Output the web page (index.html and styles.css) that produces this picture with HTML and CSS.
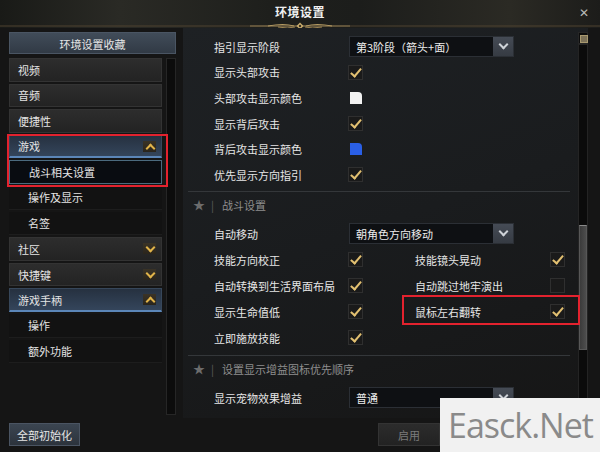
FILE: index.html
```html
<!DOCTYPE html>
<html lang="zh-CN">
<head>
  <meta charset="utf-8">
  <title>环境设置</title>
  <link rel="stylesheet" href="styles.css">
</head>
<body>
  <div class="win">
    <!-- 标题栏 -->
    <header class="titlebar">
      <div class="title-row">
        <span></span>
        <span class="title">环境设置</span>
        <span class="close">✕</span>
      </div>
      <svg class="rule" width="600" height="8" viewBox="0 0 600 8">
        <line x1="0" y1="4" x2="600" y2="4" stroke="#4f4330" stroke-width="1"/>
        <line x1="250" y1="4" x2="350" y2="4" stroke="#8c7850" stroke-width="1"/>
        <path d="M268 4 Q284 1 294 4 M332 4 Q316 1 306 4" stroke="#b59b63" stroke-width="1.2" fill="none"/>
        <path d="M278 5 Q288 7 295 5 M322 5 Q312 7 305 5" stroke="#9c8453" stroke-width="1" fill="none"/>
        <path d="M300 0.5 L303.5 4 L300 7.5 L296.5 4 Z" fill="#c9ad6e"/>
        <circle cx="300" cy="4" r="1.2" fill="#3a3020"/>
      </svg>
    </header>

    <div class="main">
      <!-- 左侧菜单 -->
      <aside class="side">
        <div class="fav">环境设置收藏</div>
        <div class="side-body">
          <div class="menu">
            <div class="item cat">视频</div>
            <div class="item cat">音频</div>
            <div class="item cat">便捷性</div>
            <div class="marked">
              <div class="item cat open">游戏<span class="chev up"></span></div>
              <div class="item sub active">战斗相关设置</div>
            </div>
            <div class="item sub">操作及显示</div>
            <div class="item sub">名签</div>
            <div class="item cat">社区<span class="chev"></span></div>
            <div class="item cat">快捷键<span class="chev"></span></div>
            <div class="item cat open">游戏手柄<span class="chev up"></span></div>
            <div class="item sub">操作</div>
            <div class="item sub">额外功能</div>
          </div>
          <div class="side-track"></div>
        </div>
      </aside>

      <!-- 右侧设置 -->
      <section class="panel">
        <div class="content">
          <div class="group first">
            <div class="row">
              <span class="label">指引显示阶段</span>
              <div class="select"><span>第3阶段（箭头+面）</span><i class="sel-btn"></i></div>
            </div>
            <div class="row"><span class="label">显示头部攻击</span><span class="check on"></span></div>
            <div class="row"><span class="label">头部攻击显示颜色</span><span class="swatch white"></span></div>
            <div class="row"><span class="label">显示背后攻击</span><span class="check on"></span></div>
            <div class="row"><span class="label">背后攻击显示颜色</span><span class="swatch blue"></span></div>
            <div class="row"><span class="label">优先显示方向指引</span><span class="check on"></span></div>
          </div>

          <div class="divider"></div>
          <div class="sec-head"><span class="star">★</span><span class="bar">|</span>战斗设置</div>

          <div class="group combat">
            <div class="row">
              <span class="label">自动移动</span>
              <div class="select"><span>朝角色方向移动</span><i class="sel-btn"></i></div>
            </div>
            <div class="row">
              <span class="label">技能方向校正</span><span class="check on"></span>
              <span class="label">技能镜头晃动</span><span class="check on"></span>
            </div>
            <div class="row">
              <span class="label">自动转换到生活界面布局</span><span class="check on"></span>
              <span class="label">自动跳过地牢演出</span><span class="check"></span>
            </div>
            <div class="row">
              <span class="label">显示生命值低</span><span class="check on"></span>
              <span class="label marked-cell">鼠标左右翻转</span><span class="check on"></span>
            </div>
            <div class="row"><span class="label">立即施放技能</span><span class="check on"></span></div>
          </div>

          <div class="divider"></div>
          <div class="sec-head"><span class="star">★</span><span class="bar">|</span>设置显示增益图标优先顺序</div>

          <div class="group combat">
            <div class="row">
              <span class="label">显示宠物效果增益</span>
              <div class="select"><span>普通</span><i class="sel-btn"></i></div>
            </div>
          </div>
        </div>

        <div class="vscroll">
          <div class="vs-up"></div>
          <div class="vs-track"><div class="vs-thumb"></div></div>
        </div>
      </section>
    </div>

    <footer class="bottom">
      <button class="btn">全部初始化</button>
      <button class="btn apply">启用</button>
    </footer>

    <div class="watermark">Easck.Net</div>
  </div>
</body>
</html>
```

FILE: styles.css
```css
/* 全局 */
* { margin: 0; padding: 0; box-sizing: border-box; }
body {
  width: 600px;
  height: 452px;
  overflow: hidden;
  background: #141414;
  font-family: "Noto Sans CJK SC", "Noto Sans", sans-serif;
  font-size: 11px;
  color: #e4e4e4;
}
.win {
  position: relative;
  width: 600px;
  height: 452px;
  display: flex;
  flex-direction: column;
  background: #151515;
}

/* 标题栏 */
.titlebar {
  height: 28px;
  background: linear-gradient(90deg, #191a17 0%, #2a2a25 20%, #1e1f1c 45%, #1c1d1b 60%, #2b2a24 85%, #1c1c1a 100%);
}
.title-row {
  height: 22px;
  display: grid;
  grid-template-columns: 1fr auto 1fr;
  align-items: center;
}
.title { font-size: 12px; color: #f0f0f0; font-weight: 700; letter-spacing: 0.5px; }
.close { justify-self: end; margin-right: 11px; color: #b8b8b8; font-size: 12px; }
.rule { display: block; }

/* 主体 */
.main { height: 390px; display: flex; }

/* 左侧菜单 */
.side { width: 167px; margin-left: 9px; display: flex; flex-direction: column; }
.fav {
  margin-top: 4px;
  height: 22px;
  line-height: 22px;
  text-align: center;
  color: #e6e6e6;
  background: linear-gradient(#414c59, #313a45);
  border: 1px solid #4a5563;
}
.side-body { margin-top: 4px; height: 357px; display: flex; gap: 4px; }
.menu { width: 153px; display: flex; flex-direction: column; gap: 2px; }
.side-track { width: 10px; background: #0c0c0c; border: 1px solid #262626; }
.marked { position: relative; display: flex; flex-direction: column; gap: 2px; }
.marked::after {
  content: "";
  position: absolute;
  left: -2px; top: -1px; right: -6px; bottom: -3px;
  border: 2px solid #e3222e;
}
.item {
  height: 23.6px;
  display: flex;
  align-items: center;
  justify-content: space-between;
  padding-left: 8px;
  padding-right: 5px;
}
.cat { background: linear-gradient(#2d2d2d, #232323); border: 1px solid #333; }
.cat.open {
  background: linear-gradient(#263140, #34455b);
  border: 1px solid #37475a;
  border-bottom: 2px solid #5b86b8;
}
.sub { background: #121212; border-bottom: 1px solid #1d1d1d; padding-left: 19px; }
.sub.active { background: #090c11; border: 1px solid #4b6a7e; }
.chev {
  width: 13px;
  height: 11px;
  background: linear-gradient(#3a3326, #2a251c);
  position: relative;
}
.chev::before {
  content: "";
  position: absolute;
  left: 3.5px; top: 1px;
  width: 5px; height: 5px;
  border-right: 2px solid #e1b44a;
  border-bottom: 2px solid #e1b44a;
  transform: rotate(45deg);
}
.chev.up::before { top: 4px; transform: rotate(-135deg); }

/* 右侧设置面板 */
.panel { width: 405px; margin-left: 7px; display: flex; background: linear-gradient(160deg, #1e2124 0%, #1a1c1e 50%, #161616 100%); }
.content { width: 392px; padding: 6px 0 0 5px; }
.group { padding-left: 26px; }
.combat { margin-top: 3px; }
.row {
  height: 25.6px;
  display: grid;
  grid-template-columns: 134px 67px 135px auto;
  align-items: center;
}
.combat .row { height: 26px; }
.label { color: #e6e6e6; white-space: nowrap; }
.marked-cell { position: relative; }
.marked-cell::after {
  content: "";
  position: absolute;
  left: -13px; top: -9px;
  width: 174px; height: 26px;
  border: 2px solid #e3222e;
}
.check {
  width: 15px;
  height: 15px;
  background: #1a1a1a;
  border: 1px solid #2f2f2f;
  position: relative;
}
.check.on::before {
  content: "";
  position: absolute;
  left: 4px; top: 0px;
  width: 4px; height: 9px;
  border-right: 2.4px solid #e2c071;
  border-bottom: 2.4px solid #e2c071;
  transform: rotate(40deg);
}
.swatch { width: 12px; height: 12px; margin-left: 2px; border-top-right-radius: 4px; }
.swatch.white { background: #f2f2f2; }
.swatch.blue { background: #2a5fe6; }
.select {
  grid-column: 2 / 5;
  width: 165px;
  height: 21px;
  margin-left: 1px;
  display: flex;
  align-items: center;
  justify-content: space-between;
  padding-left: 6px;
  background: #0e1013;
  border: 1px solid #2b2f35;
  color: #ececec;
}
.sel-btn {
  width: 20px;
  height: 19px;
  background: linear-gradient(#454b55, #363b43);
  position: relative;
}
.sel-btn::before {
  content: "";
  position: absolute;
  left: 6.5px; top: 4px;
  width: 5px; height: 5px;
  border-right: 2px solid #cfd3d8;
  border-bottom: 2px solid #cfd3d8;
  transform: rotate(45deg);
}
.divider { margin-top: 3px; width: 382px; height: 1px; background: #34373a; }
.sec-head { height: 26px; display: flex; align-items: center; padding-left: 5px; color: #8e8e8e; }
.star { color: #6c6c6c; font-size: 12px; }
.bar { color: #5e5e5e; margin: 0 8px 0 6px; }
.group.combat + .divider { margin-top: 4px; }

/* 滚动条 */
.vscroll { width: 10px; margin: 4px 0 0 3px; height: 383px; display: flex; flex-direction: column; }
.vs-up {
  height: 12px;
  background: #0c0c0c;
  border: 1px solid #262626;
  position: relative;
}
.vs-up::before {
  content: "";
  position: absolute;
  left: 1px; top: 2px;
  width: 6px; height: 6px;
  background: #7d7258;
  border: 1px solid #a8996f;
}
.vs-track { flex: 1; background: #0b0b0b; border: 1px solid #242424; padding-top: 180px; }
.vs-thumb { height: 125px; background: linear-gradient(90deg, #3b3b3b, #4d4d4d); border: 1px solid #575757; border-top-color: #8a8a8a; }

/* 底部按钮 */
.bottom { height: 34px; display: flex; align-items: flex-start; padding: 5px 0 0 9px; }
.btn {
  height: 23px;
  font-family: inherit;
  font-size: 11px;
  color: #e6e6e6;
  background: linear-gradient(#3b4551, #2c333c);
  border: 1px solid #4a5462;
  width: 71px;
}
.apply {
  width: 62px;
  margin-left: 298px;
  color: #7b7b7b;
  background: linear-gradient(#2c2c2c, #222);
  border: 1px solid #333;
}

/* 水印 */
.watermark {
  position: absolute;
  right: 0; bottom: 0;
  width: 160px; height: 54px;
  background: #f1f1f1;
  color: #8a8a8a;
  font-family: "Open Sans", sans-serif;
  font-size: 34px;
  letter-spacing: -1px;
  line-height: 54px;
  padding-left: 8px;
}
```
